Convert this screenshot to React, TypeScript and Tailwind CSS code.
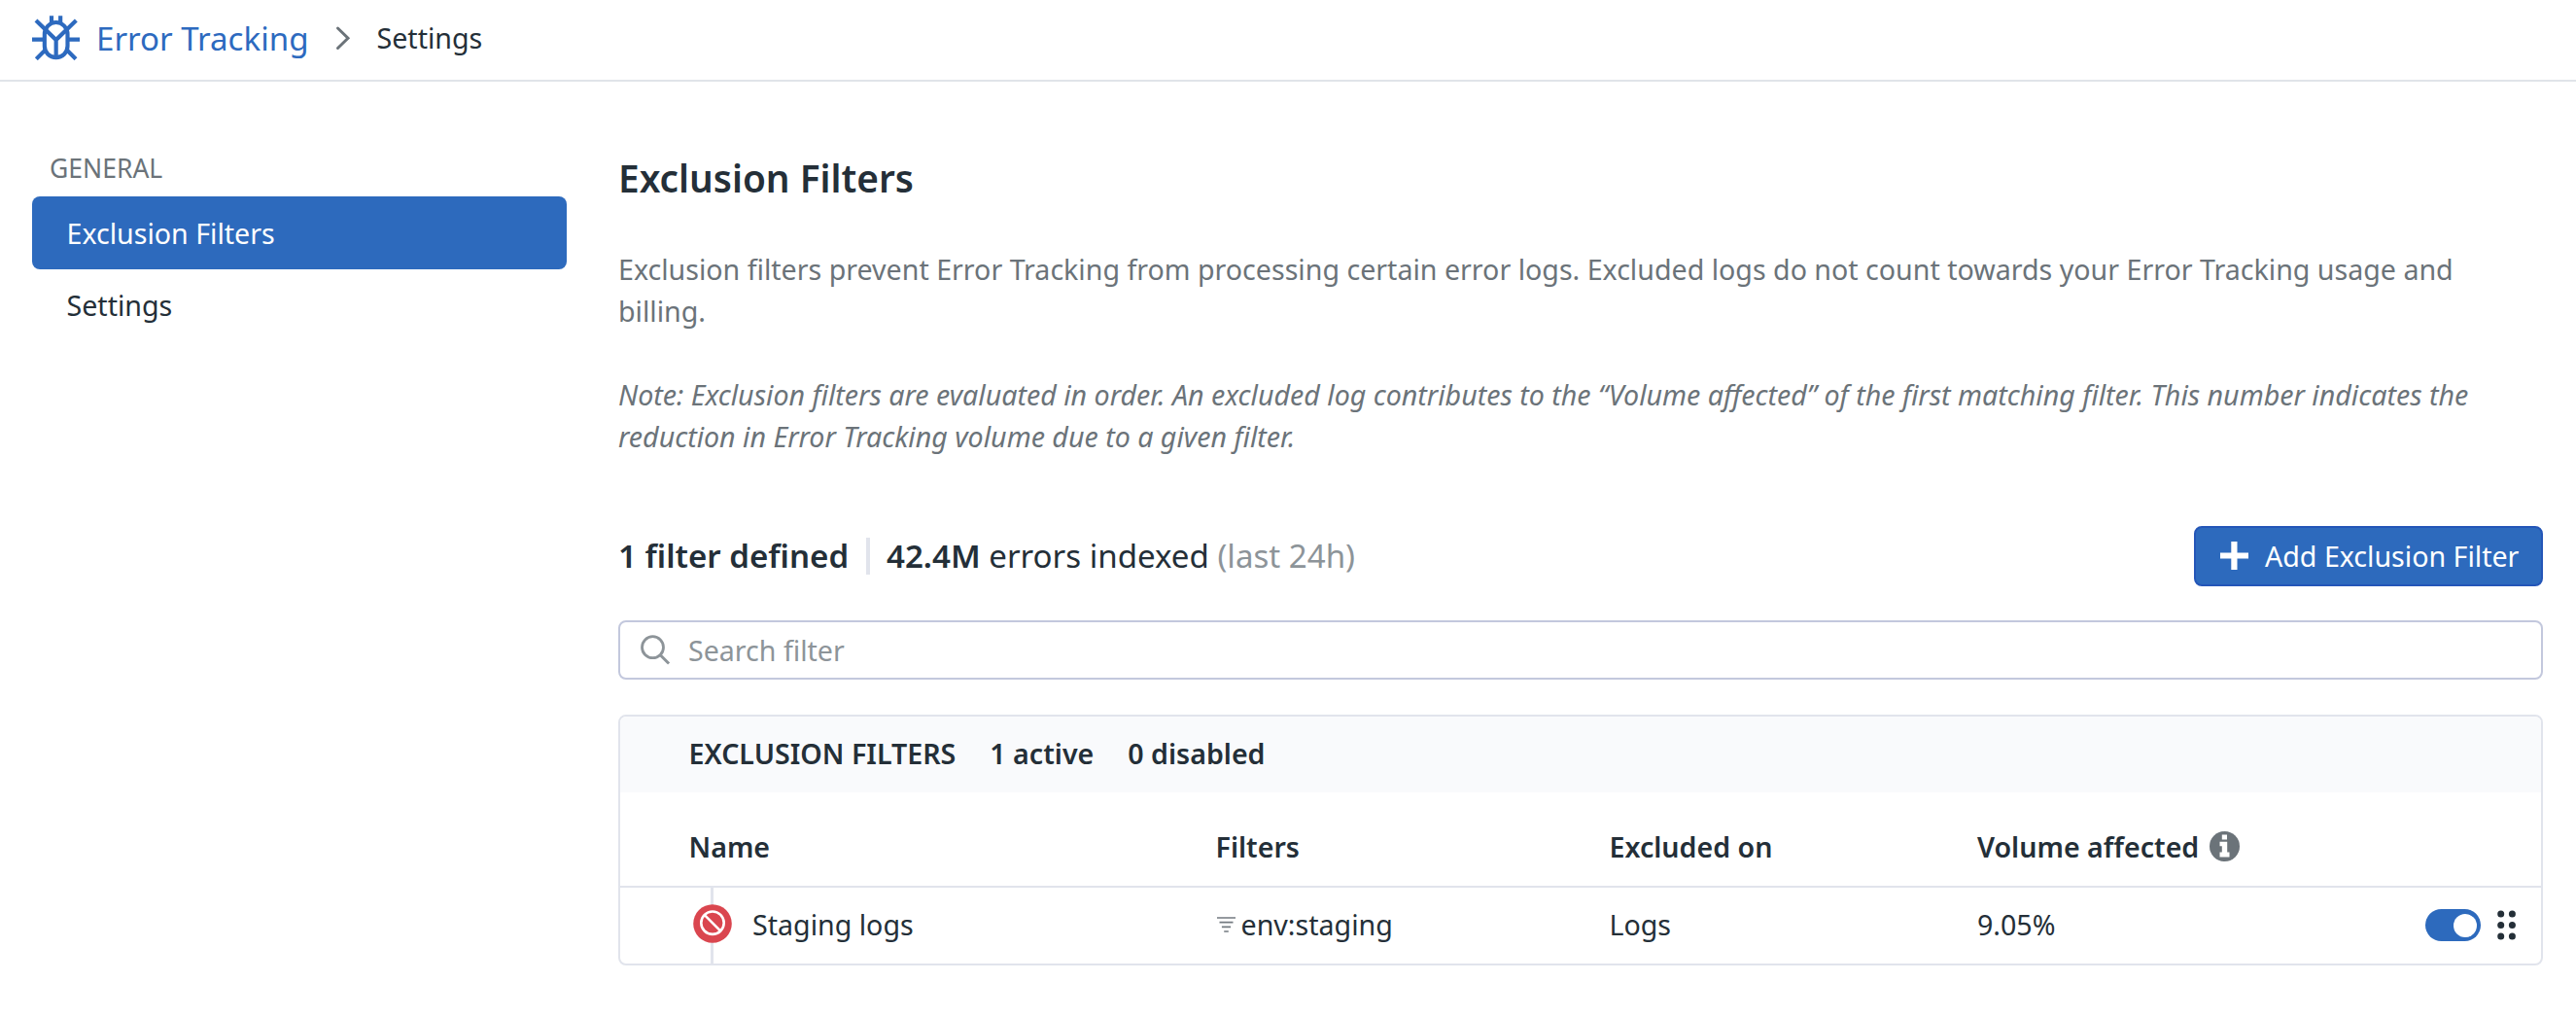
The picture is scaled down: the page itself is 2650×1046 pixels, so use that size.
import type { ReactNode } from "react";

function BugIcon() {
  return (
    <svg className="h-[46px] w-[49px] shrink-0" viewBox="39 22 147 138" fill="none" stroke="#2d6abf" strokeWidth="12.500">
      <path d="M99 23v20M126.500 23v20" strokeWidth="12.500" />
      <path d="M77.500 80a35.500 37 0 0 1 71 0v36a35.500 35.500 0 0 1-71 0z" />
      <path d="M51 37l62 60 62-60M113 95v56" />
      <path d="M39 96h38M149 96h37M52 156l29-29M174 156l-29-29" />
    </svg>
  );
}

function ChevronIcon() {
  return (
    <svg className="h-[26px] w-[16px] shrink-0" viewBox="0 0 16 26" fill="none" stroke="#6b7379" strokeWidth="3" strokeLinecap="round">
      <path d="M2.500 3l10.500 10.200L2.500 23.500" />
    </svg>
  );
}

function SearchIcon() {
  return (
    <svg className="h-[31px] w-[31px] shrink-0" viewBox="0 0 31 31" fill="none" stroke="#8d9499" strokeWidth="2.800">
      <circle cx="12.500" cy="12.700" r="11" />
      <path d="M20.300 20.700l8.800 8.800" strokeWidth="3" />
    </svg>
  );
}

function PlusIcon() {
  return (
    <svg className="h-[29px] w-[29px] shrink-0" viewBox="0 0 29 29" fill="#fff">
      <path d="M11.300 0h6.200v11.500H29v6H17.500V29h-6.200V17.500H0v-6h11.300z" />
    </svg>
  );
}

function InfoIcon() {
  return (
    <svg className="mb-[1px] ml-[11px] h-[31px] w-[31px] shrink-0" viewBox="0 0 31 31">
      <circle cx="15.500" cy="15.500" r="15.500" fill="#6b7379" />
      <path d="M12.800 3.500h5.200v5h-5.200zM10.500 10.800h7.700v10.700h2.300v5h-10v-5h2.300v-6.200h-2.300z" fill="#fff" />
    </svg>
  );
}

function BlockedIcon() {
  return (
    <svg className="relative h-[40px] w-[40px]" viewBox="0 0 40 40" fill="none" stroke="#fff" strokeWidth="2.600">
      <circle cx="20" cy="20" r="19.800" fill="#da464f" stroke="none" />
      <circle cx="20" cy="19.200" r="11.700" />
      <path d="M11.600 10.900l16.700 16.700" />
    </svg>
  );
}

function FilterIcon() {
  return (
    <svg className="mr-[6px] h-[18px] w-[19px] shrink-0" viewBox="0 0 19 18" fill="none" stroke="#737a80" strokeWidth="1.700">
      <path d="M0 2h19M2.500 6.700h14M4.900 11.300h9.200M7.200 16h4.600" />
    </svg>
  );
}

function GripIcon() {
  return (
    <svg className="ml-[17px] h-[31px] w-[19px] shrink-0" viewBox="0 0 19 31" fill="#242f38">
      {[4, 15.5, 27].map((y) => (
        <g key={y}>
          <circle cx="3.700" cy={y} r="3.500" />
          <circle cx="15.400" cy={y} r="3.500" />
        </g>
      ))}
    </svg>
  );
}

function NavItem({ active, children }: { active?: boolean; children: ReactNode }) {
  return (
    <a
      className={
        active
          ? "flex h-[75px] items-center rounded-[8px] bg-[#2d6abd] pl-[35.5px] text-white"
          : "flex h-[74px] items-center pl-[35.5px] text-[#242f38]"
      }
    >
      {children}
    </a>
  );
}

function Header() {
  return (
    <header className="flex h-[84px] items-center border-b-2 border-[#e0e4e9] pb-[4px] pl-[33px]">
      <BugIcon />
      <a className="ml-[17px] pt-[1px] text-[33.1px] text-[#2d6abf]">Error Tracking</a>
      <span className="ml-[28px] mr-[26px] flex">
        <ChevronIcon />
      </span>
      <span>Settings</span>
    </header>
  );
}

function FilterTable() {
  return (
    <section className="mt-[36px] h-[258px] overflow-hidden rounded-[8px] border-2 border-[#e1e4ec]">
      <div className="flex h-[78px] items-center gap-[35px] bg-[#f9fafc] pb-[2px] pl-[70.5px] font-semibold">
        <span>EXCLUSION FILTERS</span>
        <span>1 active</span>
        <span>0 disabled</span>
      </div>
      <div className="grid h-[98px] grid-cols-[542px_405px_378.500px_1fr] items-center border-b-2 border-[#e1e4ec] pl-[70.5px] pt-[16px] font-semibold">
        <span>Name</span>
        <span>Filters</span>
        <span>Excluded on</span>
        <span className="flex items-center">
          Volume affected
          <InfoIcon />
        </span>
      </div>
      <div className="grid h-[78px] grid-cols-[542px_405px_378.500px_1fr] items-center pl-[70.5px]">
        <div className="flex h-full items-center">
          <div className="relative ml-[4px] flex h-full w-[40px] items-center pb-[4px]">
            <span className="absolute inset-y-0 left-[18px] w-[3px] bg-[#e1e4ec]" />
            <BlockedIcon />
          </div>
          <span className="ml-[21.5px] pb-[2px]">Staging logs</span>
        </div>
        <div className="flex items-center pb-[2px] pl-[1px]">
          <FilterIcon />
          env:staging
        </div>
        <span className="pb-[2px]">Logs</span>
        <div className="flex items-center justify-between pr-[26px]">
          <span className="pb-[2px]">9.05%</span>
          <div className="flex items-center">
            <span className="flex h-[33px] w-[57px] items-center justify-end rounded-full bg-[#2d6abd] pr-[4px]">
              <span className="h-[24px] w-[24px] rounded-full bg-white" />
            </span>
            <GripIcon />
          </div>
        </div>
      </div>
    </section>
  );
}

export default function App() {
  return (
    <div className="h-[1046px] w-[2650px] overflow-hidden bg-white font-['Noto_Sans',sans-serif] text-[28.6px] leading-[43.1px] text-[#242f38]">
      <Header />
      <div className="flex pl-[33px]">
        <nav className="w-[550px] pt-[69px]">
          <h2 className="mb-[9px] pl-[18px] text-[26.5px] leading-[40px] text-[#6b7379]">GENERAL</h2>
          <NavItem active>Exclusion Filters</NavItem>
          <NavItem>Settings</NavItem>
        </nav>
        <main className="ml-[53px] w-[1980px] pt-[73px]">
          <h1 className="text-[38.8px] font-semibold leading-[52px]">Exclusion Filters</h1>
          <div className="mt-[46px] text-[#6b7379]">
            <p>
              Exclusion filters prevent Error Tracking from processing certain error logs. Excluded logs do not count towards
              your Error Tracking usage and
              <br />
              billing.
            </p>
            <p className="mt-[43px] italic">
              Note: Exclusion filters are evaluated in order. An excluded log contributes to the “Volume affected” of the first
              matching filter. This number indicates the
              <br />
              reduction in Error Tracking volume due to a given filter.
            </p>
          </div>
          <div className="mt-[70.600px] flex h-[62px] items-center justify-between">
            <div className="flex items-center text-[33.1px]">
              <span className="w-[255px] whitespace-nowrap font-semibold">1 filter defined</span>
              <span className="h-[38px] w-[4px] bg-[#e1e4ec]" />
              <span className="ml-[17px]">
                <b className="font-semibold">42.4M</b> errors indexed <span className="text-[#8d9499]">(last 24h)</span>
              </span>
            </div>
            <button className="flex h-[62px] w-[359px] items-center gap-[17px] rounded-[8px] border-2 border-[#2456b8] bg-[#2d6abd] pl-[25px] text-white">
              <PlusIcon />
              <span className="whitespace-nowrap">Add Exclusion Filter</span>
            </button>
          </div>
          <div className="mt-[35px] flex h-[61px] items-center gap-[18px] rounded-[8px] border-2 border-[#c3c8dd] pl-[21px] text-[#8d9499]">
            <SearchIcon />
            <span>Search filter</span>
          </div>
          <FilterTable />
        </main>
      </div>
    </div>
  );
}
